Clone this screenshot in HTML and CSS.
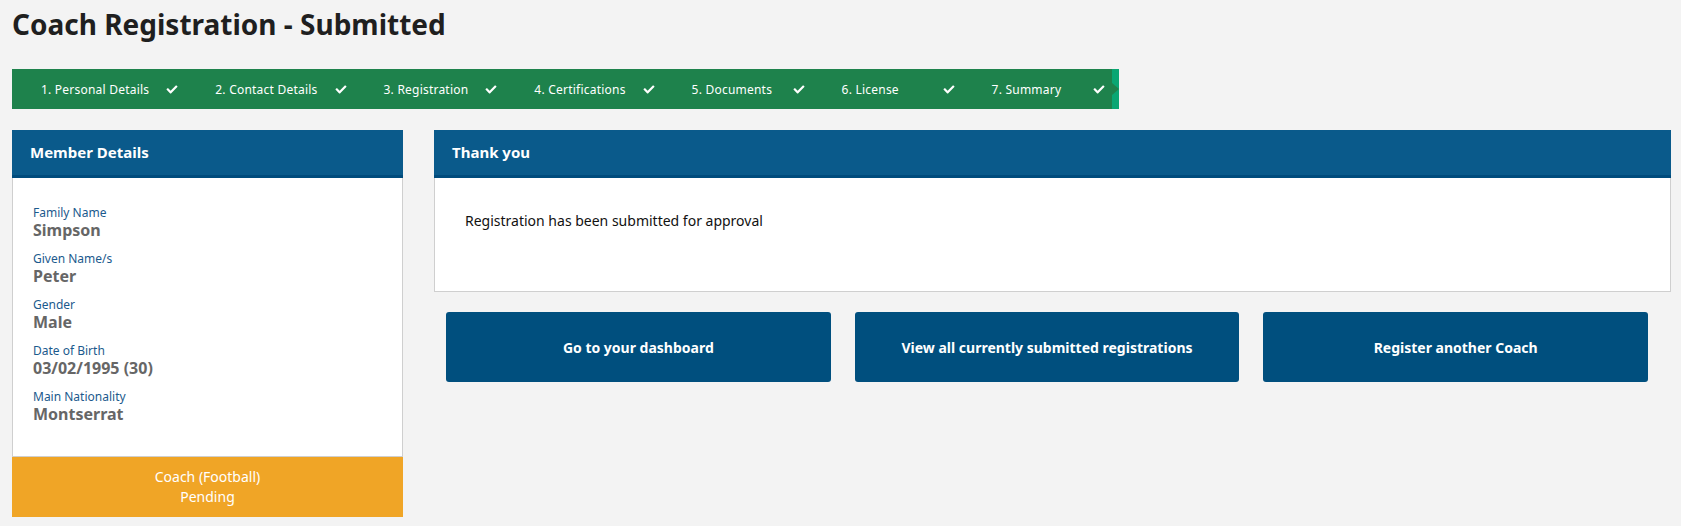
FILE: index.html
```html
<!DOCTYPE html>
<html lang="en">
<head>
<meta charset="utf-8">
<title>Coach Registration - Submitted</title>
<link rel="stylesheet" href="styles.css">
</head>
<body>
<h1 class="page-title">Coach Registration - Submitted</h1>

<nav class="steps">
  <ol class="step-list">
    <li class="step"><span class="step-label">1. Personal Details</span><svg class="check" viewBox="0 0 512 512" aria-hidden="true"><path d="M173.9 439.4l-166.4-166.4c-10-10-10-26.2 0-36.2l36.2-36.2c10-10 26.2-10 36.2 0L192 312.7 432.1 72.6c10-10 26.2-10 36.2 0l36.2 36.2c10 10 10 26.2 0 36.2l-294.4 294.4c-10 10-26.2 10-36.2 0z"/></svg></li>
    <li class="step"><span class="step-label">2. Contact Details</span><svg class="check" viewBox="0 0 512 512" aria-hidden="true"><path d="M173.9 439.4l-166.4-166.4c-10-10-10-26.2 0-36.2l36.2-36.2c10-10 26.2-10 36.2 0L192 312.7 432.1 72.6c10-10 26.2-10 36.2 0l36.2 36.2c10 10 10 26.2 0 36.2l-294.4 294.4c-10 10-26.2 10-36.2 0z"/></svg></li>
    <li class="step"><span class="step-label">3. Registration</span><svg class="check" viewBox="0 0 512 512" aria-hidden="true"><path d="M173.9 439.4l-166.4-166.4c-10-10-10-26.2 0-36.2l36.2-36.2c10-10 26.2-10 36.2 0L192 312.7 432.1 72.6c10-10 26.2-10 36.2 0l36.2 36.2c10 10 10 26.2 0 36.2l-294.4 294.4c-10 10-26.2 10-36.2 0z"/></svg></li>
    <li class="step"><span class="step-label">4. Certifications</span><svg class="check" viewBox="0 0 512 512" aria-hidden="true"><path d="M173.9 439.4l-166.4-166.4c-10-10-10-26.2 0-36.2l36.2-36.2c10-10 26.2-10 36.2 0L192 312.7 432.1 72.6c10-10 26.2-10 36.2 0l36.2 36.2c10 10 10 26.2 0 36.2l-294.4 294.4c-10 10-26.2 10-36.2 0z"/></svg></li>
    <li class="step"><span class="step-label">5. Documents</span><svg class="check" viewBox="0 0 512 512" aria-hidden="true"><path d="M173.9 439.4l-166.4-166.4c-10-10-10-26.2 0-36.2l36.2-36.2c10-10 26.2-10 36.2 0L192 312.7 432.1 72.6c10-10 26.2-10 36.2 0l36.2 36.2c10 10 10 26.2 0 36.2l-294.4 294.4c-10 10-26.2 10-36.2 0z"/></svg></li>
    <li class="step"><span class="step-label">6. License</span><svg class="check" viewBox="0 0 512 512" aria-hidden="true"><path d="M173.9 439.4l-166.4-166.4c-10-10-10-26.2 0-36.2l36.2-36.2c10-10 26.2-10 36.2 0L192 312.7 432.1 72.6c10-10 26.2-10 36.2 0l36.2 36.2c10 10 10 26.2 0 36.2l-294.4 294.4c-10 10-26.2 10-36.2 0z"/></svg></li>
    <li class="step"><span class="step-label">7. Summary</span><svg class="check" viewBox="0 0 512 512" aria-hidden="true"><path d="M173.9 439.4l-166.4-166.4c-10-10-10-26.2 0-36.2l36.2-36.2c10-10 26.2-10 36.2 0L192 312.7 432.1 72.6c10-10 26.2-10 36.2 0l36.2 36.2c10 10 10 26.2 0 36.2l-294.4 294.4c-10 10-26.2 10-36.2 0z"/></svg></li>
  </ol>
  <span class="step-end"></span>
</nav>

<main class="layout">
  <section class="card member">
    <header class="card-header">Member Details</header>
    <div class="member-body">
      <div class="field"><div class="field-label">Family Name</div><div class="field-value">Simpson</div></div>
      <div class="field"><div class="field-label">Given Name/s</div><div class="field-value">Peter</div></div>
      <div class="field"><div class="field-label">Gender</div><div class="field-value">Male</div></div>
      <div class="field"><div class="field-label">Date of Birth</div><div class="field-value">03/02/1995 (30)</div></div>
      <div class="field"><div class="field-label">Main Nationality</div><div class="field-value">Montserrat</div></div>
    </div>
    <footer class="member-status">Coach (Football)<br>Pending</footer>
  </section>

  <section class="main-col">
    <div class="card">
      <header class="card-header">Thank you</header>
      <div class="thanks-body">Registration has been submitted for approval</div>
    </div>
    <div class="actions">
      <a class="btn" href="#">Go to your dashboard</a>
      <a class="btn" href="#">View all currently submitted registrations</a>
      <a class="btn" href="#">Register another Coach</a>
    </div>
  </section>
</main>
</body>
</html>
```

FILE: styles.css
```css
* { box-sizing: border-box; }

body {
  margin: 0;
  padding: 0 10px 0 12px;
  background: #f3f3f3;
  font-family: "Noto Sans", "Open Sans", sans-serif;
  color: #222;
}

.page-title {
  margin: 0;
  padding-top: 4px;
  height: 69px;
  font-size: 28px;
  font-weight: 700;
  color: #1f1f1f;
  line-height: 40px;
}

.steps {
  display: flex;
  width: 1107px;
  height: 40px;
  background: #1e824c;
}

.step-list {
  display: flex;
  align-items: center;
  gap: 37px;
  flex: 1;
  min-width: 0;
  margin: 0;
  padding: 0 0 0 29px;
  list-style: none;
  overflow: hidden;
}

.step {
  display: flex;
  align-items: center;
  flex: none;
  color: #fff;
  font-size: 12px;
  white-space: nowrap;
}

.step-label {
  min-width: 84px;
  letter-spacing: 0.22px;
}

.check {
  margin-left: 17px;
  width: 12px;
  height: 11px;
  fill: #fff;
}

.step-end {
  position: relative;
  flex: none;
  width: 7px;
  background: #0aa673;
}

.step-end::before {
  content: "";
  position: absolute;
  left: 0;
  top: 14px;
  border-top: 6px solid transparent;
  border-bottom: 6px solid transparent;
  border-left: 7px solid #1e824c;
}

.layout {
  display: flex;
  align-items: flex-start;
  gap: 31px;
  margin-top: 21px;
}

.card-header {
  height: 48px;
  padding: 0 0 0 18px;
  background: #0a5a8b;
  border-bottom: 3px solid #004b7c;
  color: #fff;
  font-size: 15px;
  font-weight: 700;
  line-height: 45px;
}

.member {
  width: 391px;
  flex: none;
}

.member-body {
  background: #fff;
  border: 1px solid #cfcfcf;
  border-top: 0;
  padding: 26px 20px 0;
  height: 279px;
}

.field {
  margin-bottom: 10px;
}

.field-label {
  color: #1b5a8d;
  font-size: 12px;
  line-height: 17px;
}

.field-value {
  color: #666;
  font-size: 16px;
  font-weight: 700;
  line-height: 19px;
}

.member-status {
  height: 60px;
  padding-top: 10px;
  background: #f0a526;
  color: #fff;
  font-size: 14px;
  line-height: 20px;
  text-align: center;
}

.main-col {
  flex: 1;
}

.thanks-body {
  height: 114px;
  padding: 33px 30px 0;
  background: #fff;
  border: 1px solid #cfcfcf;
  border-top: 0;
  font-size: 14px;
  color: #111;
}

.actions {
  display: grid;
  grid-template-columns: repeat(3, 1fr);
  gap: 24px;
  padding: 20px 23px 0 12px;
}

.btn {
  display: flex;
  align-items: center;
  justify-content: center;
  height: 70px;
  background: #004f7e;
  border-radius: 3px;
  color: #fff;
  font-size: 14px;
  font-weight: 700;
  text-decoration: none;
}
```
